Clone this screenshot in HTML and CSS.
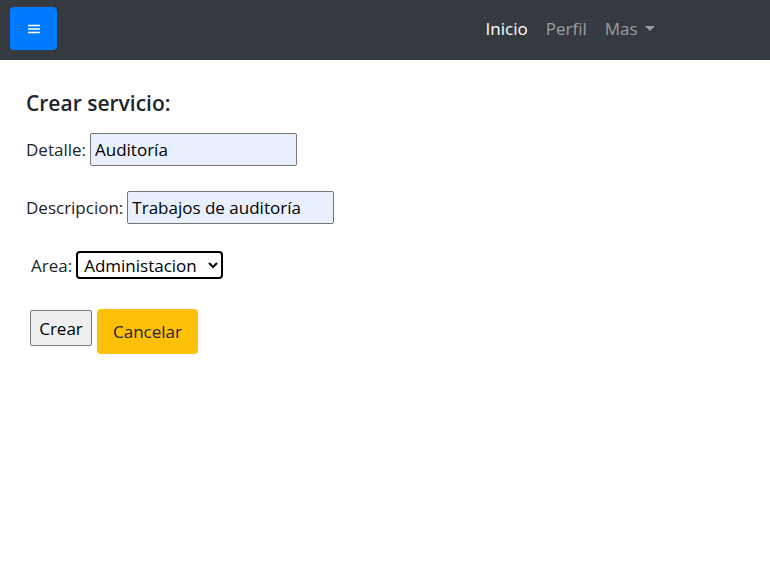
FILE: index.html
```html
<!DOCTYPE html>
<html>
<head>
<meta charset="utf-8">
<link rel="stylesheet" href="styles.css">
</head>
<body>
<nav class="navbar">
  <button class="toggler" type="button" aria-label="menu">
    <svg width="14" height="12" viewBox="0 0 14 12"><path d="M1 2.5h12M1 6h12M1 9.5h12" stroke="#fff" stroke-width="1.4"/></svg>
  </button>
  <ul class="nav">
    <li class="nav-link active">Inicio</li>
    <li class="nav-link">Perfil</li>
    <li class="nav-link dropdown">Mas <span class="caret"></span></li>
  </ul>
</nav>
<main class="content">
  <h5 class="title">Crear servicio:</h5>
  <div class="row"><label>Detalle:</label> <input class="field" type="text" value="Auditoría"></div>
  <div class="row"><label>Descripcion:</label> <input class="field" type="text" value="Trabajos de auditoría"></div>
  <div class="row area"><label>Area:</label> <select class="select"><option>Administacion</option></select></div>
  <div class="actions">
    <button class="btn-plain" type="button">Crear</button>
    <button class="btn-warning" type="button">Cancelar</button>
  </div>
</main>
</body>
</html>
```
FILE: styles.css
```css
* { box-sizing: border-box; }
body {
  margin: 0;
  font-family: "Open Sans", "Noto Sans", sans-serif;
  color: #212529;
  background: #fff;
}
.navbar {
  height: 60px;
  background: #343a40;
  display: flex;
  align-items: center;
  padding: 0 10px;
}
.toggler {
  width: 47px;
  height: 43px;
  background: #007bff;
  border: none;
  border-radius: 4px;
  display: flex;
  align-items: center;
  justify-content: center;
  padding: 0;
  margin-top: -3px;
}
.nav {
  list-style: none;
  margin: -3px 96px 0 auto;
  padding: 0;
  display: flex;
}
.nav-link {
  font-size: 17px;
  color: rgba(255,255,255,.5);
  padding: 0 9px;
}
.nav-link.active { color: #fff; }
.caret {
  display: inline-block;
  width: 0; height: 0;
  border-left: 5px solid transparent;
  border-right: 5px solid transparent;
  border-top: 5px solid rgba(255,255,255,.5);
  vertical-align: 4px;
  margin-left: 3px;
}
.content { padding: 29px 26px; }
.title {
  font-size: 21px;
  font-weight: 600;
  margin: 0 0 16px;
}
.row {
  display: flex;
  align-items: center;
  gap: 4px;
  font-size: 17px;
  margin-bottom: 25px;
}
.field {
  width: 207px;
  height: 33px;
  background: #e8f0fe;
  border: 1px solid #767676;
  border-radius: 2px;
  font-family: inherit;
  font-size: 17px;
  padding: 0 4px;
  color: #000;
}
.area { padding-left: 5px; margin-top: 27px; }
.select {
  width: 147px;
  height: 28px;
  border: 2px solid #000;
  border-radius: 4px;
  font-family: inherit;
  font-size: 17px;
  background: #fff;
  color: #000;
  padding: 0 2px;
}
.actions {
  display: flex;
  align-items: center;
  gap: 5px;
  padding-left: 4px;
  margin-top: 30px;
}
.btn-plain {
  height: 36px;
  width: 62px;
  background: #efefef;
  border: 1px solid #767676;
  border-radius: 2px;
  font-family: inherit;
  font-size: 17px;
  color: #000;
  padding: 0;
  margin-top: -7px;
}
.btn-warning {
  height: 45px;
  width: 101px;
  background: #ffc107;
  border: none;
  border-radius: 4px;
  font-family: inherit;
  font-size: 17px;
  color: #212529;
}
```
